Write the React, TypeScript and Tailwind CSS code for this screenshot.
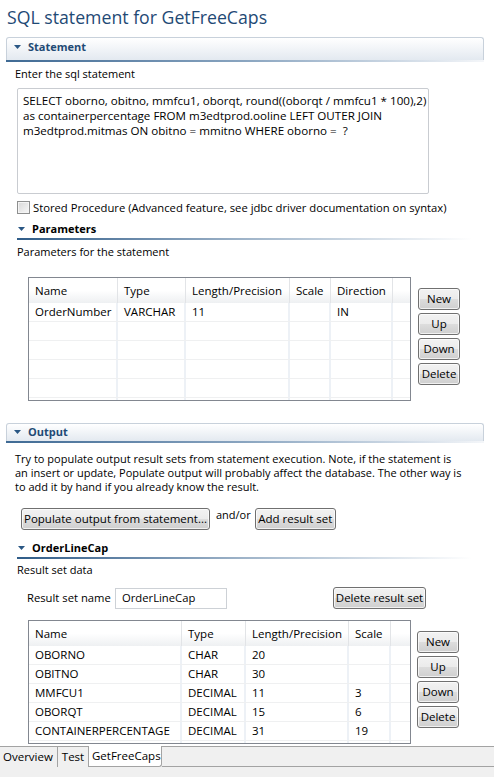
import React from "react";

function Tri({ color = "#2a5784" }: { color?: string }) {
  return (
    <svg width="7" height="4" viewBox="0 0 7 4" className="shrink-0">
      <path d="M0 0H7L3.5 4Z" fill={color} />
    </svg>
  );
}

function MainHeader({ title, boxCls }: { title: string; boxCls: string }) {
  return (
    <div className="ml-[6px] w-[478px]">
      <div
        className={`${boxCls} rounded-t-[3px] border border-b-0 border-[#c8d1db] bg-gradient-to-b from-white to-[#e3e9f0] flex items-start pl-[7px]`}
      >
        <div className="flex items-center h-[16px]">
          <Tri />
          <span className="ml-[7px] text-[11px] font-bold text-[#1f4a75] leading-[16px]">{title}</span>
        </div>
      </div>
      <div className="h-[2px] bg-gradient-to-r from-[#3f6a94] via-[#8aa5c0] to-[#f4f6f9]" />
    </div>
  );
}

function SubHeader({ title }: { title: string }) {
  return (
    <div className="ml-[17px] w-[455px]">
      <div className="flex items-center h-[16px] pl-[1px]">
        <Tri />
        <span className="ml-[7px] font-bold text-[11px] leading-[16px] text-black">{title}</span>
      </div>
      <div className="mt-[1px] h-[2px] bg-gradient-to-r from-[#2f5c88] via-[#9fb4c9] to-white" />
    </div>
  );
}

function Btn({ label, cls }: { label: string; cls: string }) {
  return (
    <div
      className={`${cls} flex items-center justify-center rounded-[3px] border border-[#707070] bg-[linear-gradient(#f2f2f2_0%,#ebebeb_50%,#dddddd_50%,#cfcfcf_100%)] text-[11.5px] leading-none text-black shadow-[inset_0_0_0_1px_rgba(255,255,255,0.7)] whitespace-nowrap`}
    >
      {label}
    </div>
  );
}

function SideButtons() {
  return (
    <div className="flex flex-col gap-[3px] mt-[11px]">
      <Btn label="New" cls="w-[42px] h-[22px]" />
      <Btn label="Up" cls="w-[42px] h-[22px]" />
      <Btn label="Down" cls="w-[42px] h-[22px]" />
      <Btn label="Delete" cls="w-[42px] h-[22px]" />
    </div>
  );
}

function Table({
  gridCls,
  headers,
  rows,
}: {
  gridCls: string;
  headers: string[];
  rows: string[][];
}) {
  const n = headers.length + 1;
  const padded = [...rows];
  while (padded.length < 6) padded.push(Array(headers.length).fill(""));
  return (
    <div className="w-[383px] h-[124px] border border-[#828790] bg-white overflow-hidden">
      <div className={`grid ${gridCls} h-[25px] bg-gradient-to-b from-white via-white to-[#eef0f2]`}>
        {[...headers, ""].map((h, i) => (
          <div
            key={i}
            className={`flex items-center pl-[6px] text-[11.5px] text-black whitespace-nowrap overflow-hidden ${
              i < n - 1 ? "border-r border-[#e2e4e7]" : ""
            }`}
          >
            {h}
          </div>
        ))}
      </div>
      {padded.map((r, ri) => (
        <div key={ri} className={`grid ${gridCls} h-[19px] border-b border-[#eff0f1]`}>
          {[...r, ""].map((c, i) => (
            <div
              key={i}
              className={`flex items-center pl-[6px] text-[11.5px] text-black whitespace-nowrap overflow-hidden ${
                i < n - 1 ? "border-r-2 border-[#edf1f6]" : ""
              }`}
            >
              {c}
            </div>
          ))}
        </div>
      ))}
    </div>
  );
}

export default function App() {
  return (
    <div className="w-[494px] h-[777px] bg-white flex flex-col overflow-hidden font-['Open_Sans',sans-serif] text-black">
      <div className="flex-1">
        {/* Title */}
        <div className="h-[37px] pl-[7px] pt-[4px]">
          <div className="text-[17.7px] leading-[26px] text-[#1f4a75]">SQL statement for GetFreeCaps</div>
        </div>

        {/* Statement section */}
        <MainHeader title="Statement" boxCls="h-[23px] pt-[1px]" />
        <div className="ml-[15px] mt-[4px] text-[11px] leading-[16px]">Enter the sql statement</div>
        <div className="ml-[17px] mt-[6px] w-[412px] h-[106px] rounded-[2px] border border-[#c9ccd1] pl-[5px] pt-[4px] text-[11.6px] leading-[15px] whitespace-pre">
          {"SELECT oborno, obitno, mmfcu1, oborqt, round((oborqt / mmfcu1 * 100),2)\nas containerpercentage FROM m3edtprod.ooline LEFT OUTER JOIN\nm3edtprod.mitmas ON obitno = mmitno WHERE oborno =  ?"}
        </div>
        <div className="ml-[17px] mt-[6px] h-[15px] flex items-center">
          <div className="w-[13px] h-[13px] border border-[#8e8f8f] bg-gradient-to-br from-[#d8d8d8] to-[#f7f7f7] shadow-[inset_0_0_0_1px_#f4f4f4]" />
          <span className="ml-[3px] text-[11.25px] leading-[15px] whitespace-nowrap">
            Stored Procedure (Advanced feature, see jdbc driver documentation on syntax)
          </span>
        </div>

        <div className="mt-[6px]">
          <SubHeader title="Parameters" />
        </div>
        <div className="ml-[17px] mt-[4px] text-[11px] leading-[16px]">Parameters for the statement</div>
        <div className="ml-[28px] mt-[17px] flex items-start gap-[7px]">
          <Table
            gridCls="grid-cols-[89px_68px_104px_41px_62px_1fr]"
            headers={["Name", "Type", "Length/Precision", "Scale", "Direction"]}
            rows={[["OrderNumber", "VARCHAR", "11", "", "IN"]]}
          />
          <SideButtons />
        </div>

        {/* Output section */}
        <div className="mt-[22px]">
          <MainHeader title="Output" boxCls="h-[18px] pt-0" />
        </div>
        <div className="ml-[15px] mt-[9px] w-[475px] text-[11px] leading-[14px] whitespace-nowrap">
          <div>Try to populate output result sets from statement execution. Note, if the statement is</div>
          <div>an insert or update, Populate output will probably affect the database. The other way is</div>
          <div>to add it by hand if you already know the result.</div>
        </div>
        <div className="ml-[21px] mt-[14px] flex items-start">
          <Btn label="Populate output from statement..." cls="w-[189px] h-[22px]" />
          <span className="ml-[6px] text-[11px] leading-[14px]">and/or</span>
          <div className="ml-[4px]">
            <Btn label="Add result set" cls="w-[81px] h-[22px]" />
          </div>
        </div>

        <div className="mt-[10px]">
          <SubHeader title="OrderLineCap" />
        </div>
        <div className="ml-[17px] mt-[3px] text-[11px] leading-[16px]">Result set data</div>
        <div className="ml-[27px] mt-[9px] h-[22px] flex items-center">
          <span className="text-[11.25px] leading-[16px] w-[88px] whitespace-nowrap">Result set name</span>
          <div className="w-[112px] h-[21px] border border-[#cdd1d6] flex items-center pl-[6px] text-[11.25px]">
            OrderLineCap
          </div>
          <div className="ml-[106px]">
            <Btn label="Delete result set" cls="w-[93px] h-[22px]" />
          </div>
        </div>
        <div className="ml-[28px] mt-[11px] flex items-start gap-[6px]">
          <Table
            gridCls="grid-cols-[153px_64px_103px_42px_1fr]"
            headers={["Name", "Type", "Length/Precision", "Scale"]}
            rows={[
              ["OBORNO", "CHAR", "20", ""],
              ["OBITNO", "CHAR", "30", ""],
              ["MMFCU1", "DECIMAL", "11", "3"],
              ["OBORQT", "DECIMAL", "15", "6"],
              ["CONTAINERPERCENTAGE", "DECIMAL", "31", "19"],
            ]}
          />
          <SideButtons />
        </div>
      </div>

      {/* Bottom tabs */}
      <div className="h-[21px] border-t border-[#a3a3a3] bg-[#f0f0f0] flex items-stretch">
        <div className="px-[3px] flex items-center text-[11.5px] border-r border-[#a3a3a3] w-[58px]">Overview</div>
        <div className="flex items-center justify-center text-[11.5px] border-r border-[#a3a3a3] w-[31px]">Test</div>
        <div className="-mt-[1px] w-[73px] bg-white border-r border-b border-[#a3a3a3] rounded-br-[3px] flex items-center pl-[3px] text-[11.5px]">
          GetFreeCaps
        </div>
        <div className="flex-1 border-b border-[#a3a3a3]" />
      </div>
      <div className="h-[10px] bg-[#f0f0f0]" />
    </div>
  );
}
